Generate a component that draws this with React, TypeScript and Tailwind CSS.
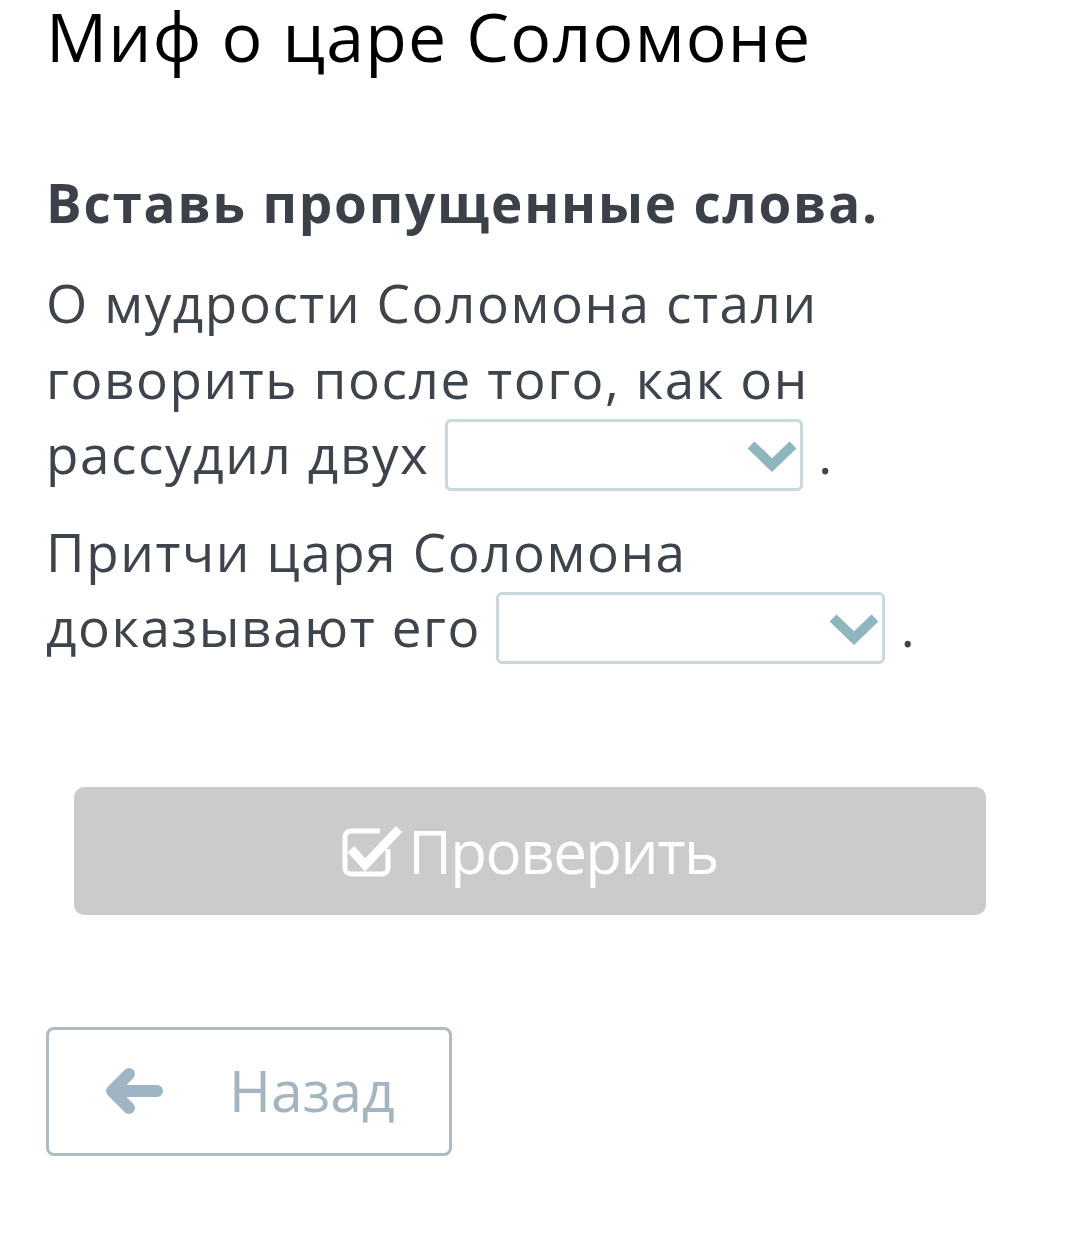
function Select({ width }: { width: number }) {
  return (
    <span
      className="inline-block h-[72px] overflow-hidden rounded-md border-[3px] border-[#c8d8dc] bg-white align-[-17px]"
      style={{ width }}
    >
      <span className="flex h-full items-center justify-end pr-[2px]">
        <svg width="52" height="36" viewBox="0 0 52 36" fill="none">
          <path d="M5 8 L26 28 L47 8" stroke="#8fb5bf" strokeWidth="10" strokeLinejoin="miter" />
        </svg>
      </span>
    </span>
  );
}

function CheckIcon() {
  return (
    <svg width="62" height="52" viewBox="0 0 62 52" fill="none" className="shrink-0">
      <path d="M46 24 V43 a6 6 0 0 1 -6 6 H9 a6 6 0 0 1 -6 -6 V12 a6 6 0 0 1 6 -6 H38" stroke="white" strokeWidth="5" />
      <path d="M9 24 L23 40 L57 4" stroke="white" strokeWidth="9" />
    </svg>
  );
}

function ArrowIcon() {
  return (
    <svg width="60" height="48" viewBox="0 0 60 48" fill="none">
      <path d="M52 24 H12 M24 7 L7 24 L24 41" stroke="#a0b5c4" strokeWidth="12" strokeLinecap="round" strokeLinejoin="round" />
    </svg>
  );
}

export default function App() {
  return (
    <div className="min-h-[1256px] bg-white pl-[46px] font-['Open_Sans',sans-serif]">
      <h1 className="text-[68px] leading-[72px] tracking-[1.2px] text-black">Миф о царе Соломоне</h1>

      <h2 className="mt-[93px] text-[53px] font-bold leading-[75px] tracking-[1.8px] text-[#3b4049]">Вставь пропущенные слова.</h2>

      <div className="mt-[25px] w-[900px] text-[53px] leading-[75.5px] tracking-[1.6px] text-[#3e444c]">
        <p>
          О мудрости Соломона стали говорить после того, как он рассудил двух <Select width={358} /> .
        </p>
        <p className="mt-[22px]">
          Притчи царя Соломона доказывают его <Select width={389} /> .
        </p>
      </div>

      <button className="ml-[28px] mt-[122px] flex h-[128px] w-[912px] items-center justify-center gap-[4px] rounded-[10px] bg-[#cbcbcb] text-[60px] tracking-[-1.5px] text-white">
        <CheckIcon />
        <span>Проверить</span>
      </button>

      <button className="mt-[112px] flex h-[129px] w-[406px] items-center gap-[64px] rounded-lg border-[3px] border-[#adbbc2] bg-white pl-[56px] text-[57px] text-[#a5b5bf]">
        <ArrowIcon />
        <span>Назад</span>
      </button>
    </div>
  );
}
